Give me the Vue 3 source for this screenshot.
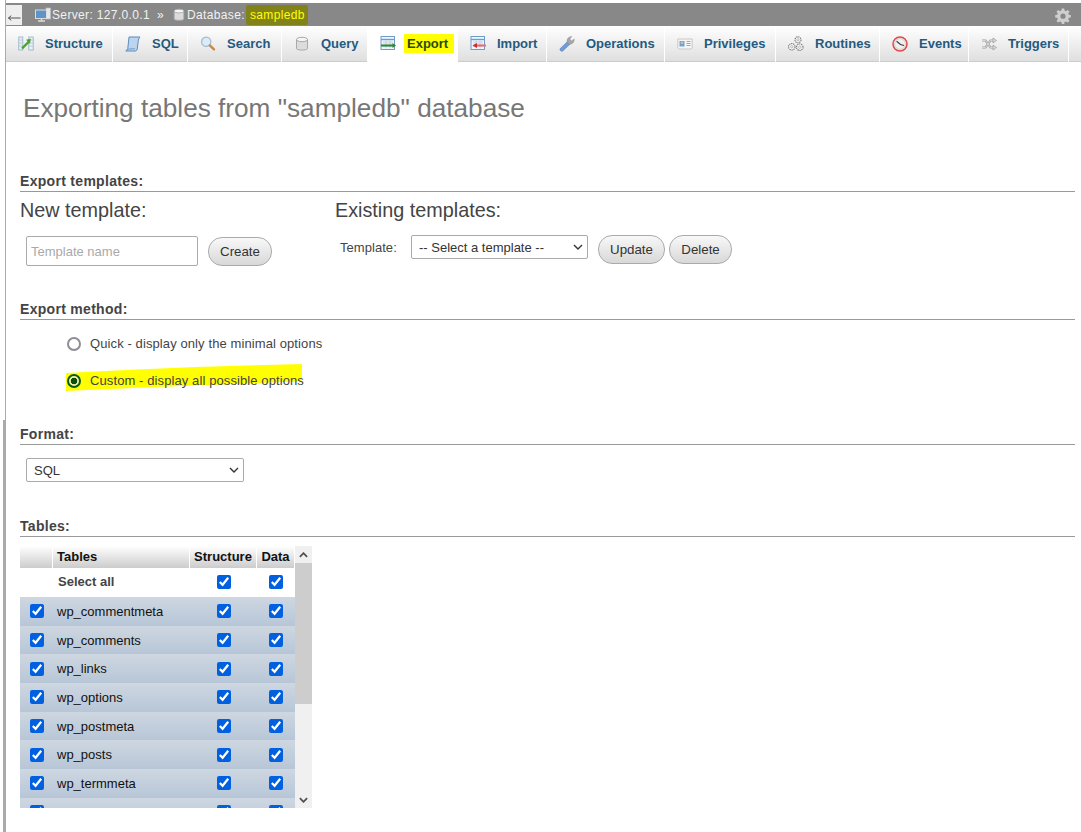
<template>
  <div class="page">
    <div class="rail"><i class="rail-top"></i><i class="rail-bottom"></i></div>
    <div class="main">
      <div class="topbar">
        <span class="back"><svg viewBox="0 0 14 8"><path d="M0.5 4 H13.5 M3.5 1.5 L0.5 4 L3.5 6.5" /></svg></span>
        <svg class="crumb-icon server" viewBox="0 0 16 16" v-html="icons.server"></svg>
        <span class="crumb">Server: 127.0.0.1</span>
        <span class="sep">»</span>
        <svg class="crumb-icon db" viewBox="0 0 16 16" v-html="icons.db"></svg>
        <span class="crumb">Database:</span>
        <span class="crumb marked">sampledb</span>
        <svg class="gear" viewBox="0 0 16 16" v-html="icons.gear"></svg>
      </div>

      <nav class="tabs">
        <a v-for="tab in tabs" :key="tab.label" class="tab" :class="{ active: tab.label === 'Export' }">
          <svg viewBox="0 0 16 16" v-html="icons[tab.icon]"></svg>
          <span class="tab-label">{{ tab.label }}</span>
        </a>
        <a class="tab"></a>
      </nav>

      <h2 class="page-title">Exporting tables from "sampledb" database</h2>

      <section class="templates">
        <h3 class="section-title">Export templates:</h3>
        <div class="template-cols">
          <div class="col-new">
            <h4>New template:</h4>
            <div class="row">
              <input class="name-input" placeholder="Template name" />
              <button class="btn create">Create</button>
            </div>
          </div>
          <div class="col-existing">
            <h4>Existing templates:</h4>
            <div class="row">
              <label class="tpl-label">Template:</label>
              <select class="tpl-select"><option>-- Select a template --</option></select>
              <button class="btn update">Update</button>
              <button class="btn delete">Delete</button>
            </div>
          </div>
        </div>
      </section>

      <section class="method">
        <h3 class="section-title">Export method:</h3>
        <label class="radio-row quick">
          <input type="radio" name="method" />
          <span>Quick - display only the minimal options</span>
        </label>
        <label class="radio-row custom">
          <svg class="marker" viewBox="0 0 237 28" preserveAspectRatio="none">
            <path d="M0 9 L60 6 L130 3 L236 0 L236 17 L170 20 L90 23 L0 27 Z" fill="#ffff00" />
          </svg>
          <input type="radio" name="method" checked />
          <span>Custom - display all possible options</span>
        </label>
      </section>

      <section class="format">
        <h3 class="section-title">Format:</h3>
        <select class="format-select"><option>SQL</option></select>
      </section>

      <section class="tables">
        <h3 class="section-title">Tables:</h3>
        <div class="table-box">
          <div class="table-scroll">
            <div class="t-row t-head">
              <div></div>
              <div class="name">Tables</div>
              <div class="mid">Structure</div>
              <div class="mid">Data</div>
            </div>
            <div class="t-row t-all">
              <div></div>
              <div class="name">Select all</div>
              <div class="mid"><input type="checkbox" checked /></div>
              <div class="mid"><input type="checkbox" checked /></div>
            </div>
            <div v-for="(name, i) in tableNames" :key="i" class="t-row t-item">
              <div class="mid"><input type="checkbox" checked /></div>
              <div class="name">{{ name }}</div>
              <div class="mid"><input type="checkbox" checked /></div>
              <div class="mid"><input type="checkbox" checked /></div>
            </div>
          </div>
          <div class="scrollbar">
            <span class="arrow"><svg viewBox="0 0 10 6"><path d="M1 5 L5 1 L9 5" /></svg></span>
            <span class="thumb"></span>
            <span class="track"></span>
            <span class="arrow"><svg viewBox="0 0 10 6"><path d="M1 1 L5 5 L9 1" /></svg></span>
          </div>
        </div>
      </section>
    </div>
  </div>
</template>

<script setup>
const tabs = [
  { label: "Structure", icon: "structure" },
  { label: "SQL", icon: "sql" },
  { label: "Search", icon: "search" },
  { label: "Query", icon: "db" },
  { label: "Export", icon: "export" },
  { label: "Import", icon: "import" },
  { label: "Operations", icon: "wrench" },
  { label: "Privileges", icon: "card" },
  { label: "Routines", icon: "gears" },
  { label: "Events", icon: "clock" },
  { label: "Triggers", icon: "shuffle" },
];

// last row is scrolled almost out of the box, only its checkboxes show
const tableNames = [
  "wp_commentmeta",
  "wp_comments",
  "wp_links",
  "wp_options",
  "wp_postmeta",
  "wp_posts",
  "wp_termmeta",
  "",
];

const sheet = (extra) =>
  `<rect x="1" y="0.5" width="13.5" height="13" fill="#f2f6fa" stroke="#6d9ecb"/><path d="M1 3.5h13.5" stroke="#6d9ecb" stroke-width="1.4"/><path d="M3 6h10M3 8h10M3 10.5h10M6 4.5v8M10 4.5v8" stroke="#b9cddf" stroke-width=".8" fill="none"/>${extra}`;

const gearAt = (x, y, r) =>
  `<circle cx="${x}" cy="${y}" r="${r}" fill="#fff" stroke="#6f6f6f" stroke-width="1.1" stroke-dasharray="1.3 .7"/><circle cx="${x}" cy="${y}" r="${r / 2.6}" fill="#fff" stroke="#999" stroke-width=".7"/>`;

const icons = {
  structure:
    '<rect x=".8" y="1" width="4" height="13" fill="#e8f0f7" stroke="#8fb0c8" stroke-width=".8"/><rect x="10.8" y="1" width="4.4" height="13" fill="#e8f0f7" stroke="#8fb0c8" stroke-width=".8"/><path d="M.8 4h4M.8 7h4M.8 10h4M10.8 4h4.4M10.8 7h4.4M10.8 10h4.4" stroke="#a8c0d4" stroke-width=".7"/><path d="M4 12.5 L11 5.5" stroke="#4aa32f" stroke-width="2.4"/><path d="M8 3.8 L12.8 2.8 L12 7.8 Z" fill="#4aa32f"/>',
  sql:
    '<path d="M4 1 H15 C14 2 13.4 3.6 13.2 5.5 L12.2 13 C12 14.2 11.4 15 10.2 15 H.8 C2 14.4 2.6 13.5 2.8 12.4 L3.6 5 C3.8 3.5 3.8 2.2 4 1 Z" fill="#bcd4ee" stroke="#5b8cc0"/><path d="M.8 15 C2 13.2 3.5 12.8 10 12.8" fill="none" stroke="#5b8cc0" stroke-width=".8"/>',
  search:
    '<circle cx="6.2" cy="5.8" r="4.6" fill="#dcebf8" stroke="#a3bbd0" stroke-width="1.3"/><path d="M9.8 9.4 L14 13.4" stroke="#c98a45" stroke-width="2.4" stroke-linecap="round"/>',
  db:
    '<path d="M2.5 3.5 V12.5 C2.5 14.6 13.5 14.6 13.5 12.5 V3.5 Z" fill="#dcdcdc" stroke="#a9a9a9"/><ellipse cx="8" cy="3.5" rx="5.5" ry="2.2" fill="#f5f5f5" stroke="#a9a9a9"/>',
  export: sheet('<path d="M1 9.5 H13" stroke="#2f8a2a" stroke-width="2"/><path d="M12.5 7 L16 9.5 L12.5 12 Z" fill="#2f8a2a"/>'),
  import: sheet('<path d="M5 9.5 H16" stroke="#f0686a" stroke-width="2"/><path d="M7 7 L2.5 9.5 L7 12 Z" fill="#d9262a"/>'),
  wrench:
    '<path d="M1 12.8 L8.4 5.6 L11 8.2 L3.8 15 C2.4 16 .2 14.2 1 12.8 Z" fill="#6f9bd6" stroke="#567fb4" stroke-width=".5"/><path d="M8 6 C7.6 3 9.6 .6 12.8 .6 L10.8 3 L12.6 5 L15.2 3 C15.4 6.4 13 8.6 10.4 8.2 Z" fill="#a6a6a6" stroke="#8a8a8a" stroke-width=".4"/>',
  card:
    '<path d="M.8 3 H15.2 V12 L14 13 H2 L.8 12 Z" fill="#f6f6f6" stroke="#c8c8c8"/><rect x="2.5" y="5" width="5" height="5.5" fill="#6ea3d6"/><circle cx="5" cy="6.8" r="1.3" fill="#e9b98e"/><path d="M9.5 5.5h4M9.5 7.5h4M9.5 9.5h4" stroke="#9aa7b5"/>',
  gears: gearAt(10, 3.8, 3) + gearAt(3.8, 10.8, 3.2) + gearAt(11.8, 11.2, 3.2),
  clock:
    '<circle cx="8" cy="8" r="7" fill="#f0f0f0" stroke="#e2474a" stroke-width="1.5"/><circle cx="8" cy="8" r="5.4" fill="none" stroke="#c4c4c4" stroke-width=".7"/><path d="M4.6 5.2 L8.5 8.4 L12 9.6" fill="none" stroke="#3a3a3a" stroke-width="1.1"/>',
  shuffle:
    '<path d="M1 4.5 H4.5 L9.5 11.5 H12.5 M1 11.5 H4.5 L9.5 4.5 H12.5" fill="none" stroke="#a0a0a0" stroke-width="2.2"/><path d="M1 4.5 H4.5 L9.5 11.5 H12.5 M1 11.5 H4.5 L9.5 4.5 H12.5" fill="none" stroke="#eee" stroke-width=".7"/><path d="M12 2 L15.5 4.5 L12 7 Z M12 9 L15.5 11.5 L12 14 Z" fill="#ddd" stroke="#8d8d8d" stroke-width=".6"/>',
  server:
    '<rect x="11" y="1" width="4.5" height="11" fill="#e8e8e8" stroke="#bbb" stroke-width=".7"/><rect x=".5" y="3" width="11" height="8.5" fill="#5f94c9" stroke="#dcdcdc"/><path d="M3 14 H10 M6.5 11.5 V14" stroke="#ddd" stroke-width="1.4"/>',
  gear:
    '<path d="M6.8 .5 H9.2 L9.6 2.6 L11 3.2 L12.8 2 L14.5 3.7 L13.2 5.4 L13.8 6.8 L15.8 7.1 V9.4 L13.8 9.8 L13.2 11.2 L14.5 12.9 L12.8 14.6 L11 13.4 L9.6 14 L9.2 16 H6.8 L6.4 14 L5 13.4 L3.2 14.6 L1.5 12.9 L2.8 11.2 L2.2 9.8 L.2 9.4 V7.1 L2.2 6.8 L2.8 5.4 L1.5 3.7 L3.2 2 L5 3.2 L6.4 2.6 Z M8 5.6 A2.6 2.6 0 1 0 8 10.8 A2.6 2.6 0 1 0 8 5.6 Z" fill="#cfcfcf" fill-rule="evenodd"/>',
};
</script>

<style>
html,
body {
  background: #fff;
  overflow: hidden;
}
</style>

<style scoped>
.page {
  display: flex;
  height: 832px;
  width: 1081px;
  overflow: hidden;
  background: #fff;
  font-family: "Liberation Sans", Arial, sans-serif;
  color: #444;
}

.rail {
  width: 6px;
  flex: none;
  display: flex;
  flex-direction: column;
}
.rail-top {
  height: 420px;
  border-right: 1px solid #aaa;
}
.rail-bottom {
  flex: 1;
  margin-left: 3px;
  background: #aaa;
}

.main {
  flex: 1;
  min-width: 0;
  padding-top: 3px;
}

.topbar {
  height: 23px;
  background: #888;
  display: flex;
  align-items: center;
  color: #f2f2f2;
  font-size: 12px;
  letter-spacing: 0.35px;
}
.back {
  width: 16px;
  height: 20px;
  margin-top: 1px;
  background: #eee;
  display: flex;
  align-items: flex-end;
  justify-content: center;
  padding-bottom: 0;
}
.back svg {
  width: 13px;
  height: 8px;
  margin-bottom: 3px;
}
.back path {
  fill: none;
  stroke: #444;
  stroke-width: 1;
}
.crumb-icon {
  flex: none;
  width: 16px;
  height: 16px;
}
.crumb-icon.server {
  margin-left: 13px;
  margin-right: 1px;
}
.crumb-icon.db {
  margin-left: 8px;
  margin-right: 1px;
  width: 14px;
  height: 14px;
}
.sep {
  margin-left: 7px;
}
.marked {
  margin-left: 1px;
  padding: 3px 3px 3px 4px;
  background: #82821a;
  color: #ffff00;
  border-radius: 2px;
}
.gear {
  width: 16px;
  height: 16px;
  margin-left: auto;
  margin-right: 10px;
  margin-top: 2px;
}

.tabs {
  display: grid;
  grid-template-columns: 106px 74px 93px 85px 89px 88px 117px 110px 103px 88px 99px 12px;
  column-gap: 1px;
  height: 36px;
}
.tab {
  display: flex;
  align-items: center;
  gap: 11px;
  padding-left: 12px;
  background: linear-gradient(#fff, #dfdfdf);
  border-bottom: 1px solid #ccc;
  box-sizing: border-box;
  color: #235a81;
  font-size: 13px;
  font-weight: bold;
  white-space: nowrap;
  overflow: hidden;
}
.tab svg {
  flex: none;
  width: 16px;
  height: 16px;
}
.tab.active {
  background: #fff;
  border-bottom-color: #fff;
  color: #2c4a00;
}
.tab.active .tab-label {
  background: #ffff00;
  margin-left: -3px;
  padding: 2px 6px 2px 3px;
}

.page-title {
  margin: 29px 0 0 17px;
  font-size: 26.2px;
  line-height: 34px;
  font-weight: normal;
  color: #777;
}

.section-title {
  margin: 0 6px 0 14px;
  height: 19px;
  line-height: 19px;
  font-size: 14px;
  letter-spacing: 0.3px;
  font-weight: bold;
  color: #444;
  border-bottom: 1px solid #999;
  box-sizing: content-box;
}

.templates {
  margin-top: 47px;
}
.template-cols {
  display: flex;
  margin-left: 14px;
}
.col-new {
  width: 315px;
}
.col-existing {
  flex: 1;
}
h4 {
  margin: 6px 0 0;
  font-size: 19.8px;
  line-height: 24px;
  font-weight: normal;
  color: #444;
}
.row {
  display: flex;
  align-items: flex-start;
  margin-top: 14px;
}
.col-new .row {
  padding-left: 6px;
}
.col-existing .row {
  margin-top: 13px;
  padding-left: 5px;
}
.name-input {
  width: 172px;
  height: 30px;
  box-sizing: border-box;
  border: 1px solid #aaa;
  border-radius: 2px;
  padding: 0 4px;
  font: 13px "Liberation Sans", Arial, sans-serif;
}
.name-input::placeholder {
  color: #a9a9a9;
  opacity: 1;
}
.btn {
  height: 29px;
  box-sizing: border-box;
  border: 1px solid #aaa;
  border-radius: 14px;
  background: linear-gradient(#f8f8f8, #d8d8d8);
  font: 13.3px "Liberation Sans", Arial, sans-serif;
  color: #333;
  padding: 0;
}
.create {
  width: 64px;
  margin-left: 10px;
  margin-top: 1px;
}
.update {
  width: 67px;
  margin-left: 10px;
}
.delete {
  width: 63px;
  margin-left: 4px;
}
.tpl-label {
  width: 71px;
  font-size: 13px;
  line-height: 25px;
  letter-spacing: 0.05px;
  color: #444;
}
.tpl-select,
.format-select {
  height: 24px;
  box-sizing: border-box;
  border: 1px solid #aaa;
  border-radius: 2px;
  appearance: none;
  background: #fff url("data:image/svg+xml,%3Csvg xmlns='http://www.w3.org/2000/svg' width='10' height='6'%3E%3Cpath d='M1 1 L5 5 L9 1' fill='none' stroke='%23333' stroke-width='1.4'/%3E%3C/svg%3E") no-repeat right 4px center;
  font: 13px "Liberation Sans", Arial, sans-serif;
  color: #333;
  padding-left: 7px;
}
.tpl-select {
  width: 177px;
}

.method {
  margin-top: 34px;
}
.radio-row {
  position: relative;
  display: flex;
  align-items: center;
  gap: 9px;
  margin-left: 61px;
  font-size: 13px;
  letter-spacing: 0.1px;
  color: #444;
  height: 20px;
}
.quick {
  margin-top: 13px;
}
.custom {
  margin-top: 17px;
}
.radio-row input {
  appearance: none;
  margin: 0;
  width: 14px;
  height: 14px;
  flex: none;
  box-sizing: border-box;
  border: 2px solid #8d8d99;
  border-radius: 50%;
  background: #fff;
  position: relative;
  top: 1px;
}
.radio-row input:checked {
  border-color: #0b5a1a;
  background: radial-gradient(circle, #0a4e12 0 3px, #f2f2a0 3.6px);
}
.radio-row span {
  position: relative;
}
.marker {
  position: absolute;
  left: -1px;
  top: -6px;
  width: 237px;
  height: 28px;
}

.format {
  margin-top: 35px;
}
.format-select {
  display: block;
  width: 218px;
  margin: 13px 0 0 20px;
}

.tables {
  margin-top: 35px;
}
.table-box {
  display: flex;
  margin: 9px 0 0 14px;
  height: 262px;
  width: 292px;
  overflow: hidden;
}
.table-scroll {
  width: 275px;
  flex: none;
}
.t-row {
  display: grid;
  grid-template-columns: 33px 137px 67px 38px;
  align-items: center;
  font-size: 13px;
  color: #111;
}
.t-row .mid {
  display: flex;
  justify-content: center;
  align-items: center;
}
.t-row .name {
  padding-left: 4px;
}
.t-row input {
  margin: 0;
  width: 14px;
  height: 14px;
  accent-color: #0060df;
}
.t-head {
  height: 22px;
  font-weight: bold;
}
.t-head > div {
  height: 22px;
  line-height: 22px;
  background: linear-gradient(#fff, #ccc);
  border-right: 1px solid #fff;
  box-sizing: border-box;
}
.t-all {
  height: 30px;
  margin-bottom: -1px;
}
.t-all .name {
  font-weight: bold;
  color: #444;
  padding-left: 5px;
  height: 30px;
  line-height: 28px;
  box-sizing: border-box;
  border-bottom: 1px solid #111;
}
.t-all .mid {
  height: 30px;
  padding-bottom: 2px;
  box-sizing: border-box;
  border-bottom: 1px solid #111;
}
.t-item {
  height: 28.7px;
  position: relative;
  background: linear-gradient(#ced7e1, #b7c6d7);
}
.scrollbar {
  width: 17px;
  flex: none;
  display: flex;
  flex-direction: column;
  background: #f0f0f0;
}
.arrow {
  height: 17px;
  flex: none;
  display: flex;
  align-items: center;
  justify-content: center;
}
.arrow svg {
  width: 9px;
  height: 6px;
}
.arrow path {
  fill: none;
  stroke: #505050;
  stroke-width: 2;
}
.thumb {
  height: 141px;
  flex: none;
  background: #cdcdcd;
}
.track {
  flex: 1;
}
</style>
